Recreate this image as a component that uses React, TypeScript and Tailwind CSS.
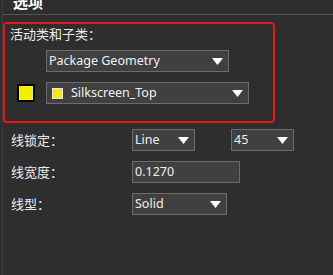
import React from 'react';

const font = { fontFamily: '"Noto Sans", "Noto Sans CJK SC", sans-serif' };

const Arrow: React.FC = () => (
  <svg width="11" height="7" viewBox="0 0 11 7" className="shrink-0">
    <polygon points="0,0 11,0 5.5,7" fill="#ffffff" />
  </svg>
);

interface SelectProps {
  value: string;
  width: string;
  swatch?: boolean;
}

const Select: React.FC<SelectProps> = ({ value, width, swatch = false }) => (
  <div
    className={`${width} h-[22px] flex items-center justify-between bg-[#404040] border border-[#6c6c6c] pr-[5px] ${
      swatch ? 'pl-[5px]' : 'pl-[2px]'
    }`}
  >
    <div className="flex items-center min-w-0">
      {swatch && <span className="w-[11px] h-[11px] bg-[#f0f000] border border-[#e8e8e8] mr-[8px]" />}
      <span className="text-[12.5px] leading-none text-[#f0f0f0] whitespace-nowrap">{value}</span>
    </div>
    <Arrow />
  </div>
);

const Row: React.FC<{ label: string; children: React.ReactNode }> = ({ label, children }) => (
  <div className="flex items-center h-[22px]">
    <span className="w-[129px] pl-[8px] text-[13px] text-[#ececec] leading-none">{label}</span>
    {children}
  </div>
);

export default function App() {
  return (
    <div className="w-[333px] h-[275px] bg-[#2e2e2e] overflow-hidden" style={font}>
      <div className="ml-[2px] h-full border-l border-[#3c3c3c]">
        {/* panel header, mostly scrolled off */}
        <div className="h-[15px] overflow-hidden border-b border-[#555555]">
          <div className="-mt-[5px] pl-[10px] text-[15px] leading-[15px] font-bold text-white">选项</div>
        </div>

        {/* active class / subclass group */}
        <div className="mt-[7px] w-[272px] h-[101px] border-2 border-[#e8161b] rounded-[4px] pl-[5px] pt-[2px]">
          <div className="text-[13px] leading-[16px] text-[#ececec]">活动类和子类：</div>
          <div className="mt-[8px] pl-[36px]">
            <Select value="Package Geometry" width="w-[183px]" />
          </div>
          <div className="mt-[10px] flex items-center">
            <span className="ml-[7px] w-[18px] h-[18px] bg-[#f0f000] border-2 border-black" />
            <div className="ml-[11px]">
              <Select value="Silkscreen_Top" width="w-[203px]" swatch />
            </div>
          </div>
        </div>

        <div className="mt-[6px] flex flex-col gap-[10px]">
          <Row label="线锁定：">
            <Select value="Line" width="w-[63px]" />
            <div className="ml-[36px]">
              <Select value="45" width="w-[63px]" />
            </div>
          </Row>
          <Row label="线宽度：">
            <div className="w-[108px] h-[22px] flex items-center bg-[#404040] border border-[#6c6c6c] pl-[2px]">
              <span className="text-[12.5px] leading-none text-[#f0f0f0]">0.1270</span>
            </div>
          </Row>
          <Row label="线型：">
            <Select value="Solid" width="w-[95px]" />
          </Row>
        </div>
      </div>
    </div>
  );
}
